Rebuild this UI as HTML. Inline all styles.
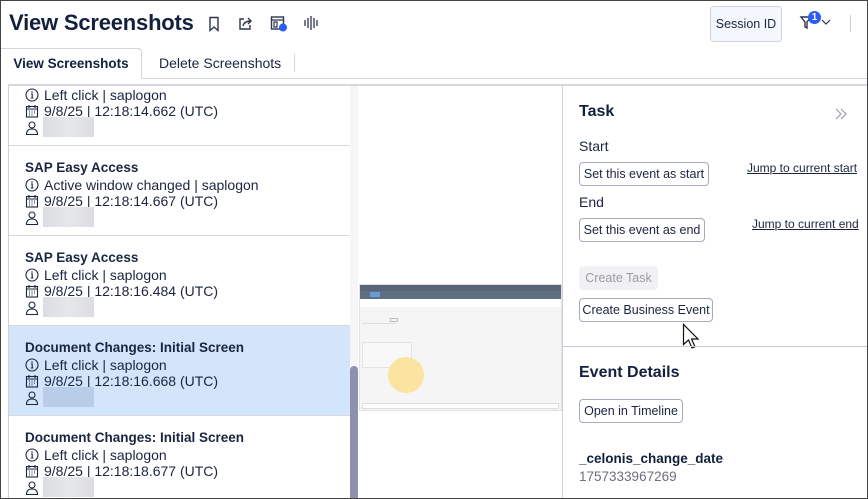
<!DOCTYPE html>
<html><head><meta charset="utf-8"><style>
*{box-sizing:border-box;margin:0;padding:0}
body{width:868px;height:499px;overflow:hidden;background:#fff;font-family:"Liberation Sans",sans-serif;color:#1a2540;position:relative}
.frame{position:absolute;left:0;top:0;width:868px;height:499px;border:1px solid #444;z-index:50;pointer-events:none}
.abs{position:absolute}
h1{position:absolute;left:9px;top:10px;font-size:22px;font-weight:bold;color:#12203d;letter-spacing:-0.2px}
.tab{position:absolute;top:48px;height:31px;font-size:14px;line-height:30px}
.item{position:absolute;left:9px;width:341px;height:90px;border-bottom:1px solid #d8d8e2;font-size:14px;color:#1a2540}
.item .t{position:absolute;left:16px;top:14px;font-weight:bold;font-size:13.5px}
.item .l{position:absolute;left:16px;height:16px;line-height:16px;white-space:nowrap}
.item svg{vertical-align:-2px;margin-right:5px}
.blur{position:absolute;left:34px;width:51px;height:20px;background:linear-gradient(90deg,#dcdde2,#e6e7ea,#dcdde2)}
.btn{position:absolute;height:24px;border:1px solid #a9a9ba;border-radius:4px;font-size:12.5px;line-height:22px;color:#1a2540;background:#fff;white-space:nowrap;text-align:center}
.lnk{position:absolute;font-size:12px;text-decoration:underline;color:#1a2540;white-space:nowrap}
.lbl{position:absolute;font-size:14px;color:#1a2540}
</style></head><body>
<div class="frame"></div>
<h1>View Screenshots</h1>
<svg class="abs" style="left:208px;top:16px" width="12" height="16" viewBox="0 0 12 16"><path d="M2 1.5h8v13l-4-3.5-4 3.5z" fill="none" stroke="#2b3550" stroke-width="1.4"/></svg>
<svg class="abs" style="left:238px;top:16px" width="16" height="15" viewBox="0 0 16 15"><path d="M6 3H2v10h10V9" fill="none" stroke="#2b3550" stroke-width="1.4"/><path d="M5 10c1-4 4-5 8-5M10 2l3 3-3 3" fill="none" stroke="#2b3550" stroke-width="1.4"/></svg>
<svg class="abs" style="left:270px;top:15px" width="18" height="18" viewBox="0 0 18 18"><rect x="1.5" y="2" width="12" height="12" fill="none" stroke="#2b3550" stroke-width="1.4"/><path d="M1.5 5h12M4 7h3v5H4z" fill="none" stroke="#2b3550" stroke-width="1.2"/><circle cx="13" cy="12.5" r="4" fill="#2d5cf6"/></svg>
<svg class="abs" style="left:303px;top:15px" width="16" height="16" viewBox="0 0 16 16"><path d="M2 5v6M5 3v10M8 1v14M11 3v10M14 5v6" stroke="#2b3550" stroke-width="1.3"/></svg>
<div class="abs" style="left:710px;top:6px;width:72px;height:36px;border:1px solid #cfd4e0;border-radius:4px;background:#f4f8fe;font-size:12.5px;line-height:34px;text-align:center">Session ID</div>
<svg class="abs" style="left:799px;top:14px" width="16" height="16" viewBox="0 0 16 16"><path d="M2 3h10l-4 5v6l-2-1V8z" fill="none" stroke="#2b3550" stroke-width="1.4"/></svg>
<div class="abs" style="left:808px;top:11px;width:13px;height:13px;border-radius:50%;background:#2d5cf6;color:#fff;font-size:10px;font-weight:bold;line-height:13px;text-align:center">1</div>
<svg class="abs" style="left:821px;top:19px" width="10" height="6" viewBox="0 0 10 6"><path d="M1 1l4 4 4-4" fill="none" stroke="#2b3550" stroke-width="1.2"/></svg>
<div class="abs" style="left:850px;top:15px;width:1px;height:17px;background:#ccc"></div>
<!-- tabs -->
<div class="abs" style="left:0;top:78px;width:868px;height:1px;background:#d4d4de"></div>
<div class="tab" style="left:1px;width:141px;border:1px solid #d4d4de;border-bottom:1px solid #fff;border-left:none;border-radius:0 4px 0 0;background:#fff;text-align:center;font-weight:bold;color:#12203d;font-size:13.5px">View Screenshots</div>
<div class="tab" style="left:159px;color:#1a2540">Delete Screenshots</div>
<div class="abs" style="left:294px;top:54px;width:1px;height:18px;background:#d4d4de"></div>
<div class="abs" style="left:8px;top:84px;width:860px;height:2px;background:#d6d6e0"></div>
<div class="abs" style="left:8px;top:86px;width:1px;height:413px;background:#cfcfd8"></div>
<!-- list -->
<svg width="0" height="0" style="position:absolute"><defs>
<symbol id="i" viewBox="0 0 14 14"><circle cx="7" cy="7" r="6" fill="none" stroke="#1a2540" stroke-width="1.1"/><path d="M6 6h1.2v4M5.8 10h2.6" stroke="#1a2540" stroke-width="1.1" fill="none"/><circle cx="7" cy="4" r=".8" fill="#1a2540"/></symbol>
<symbol id="c" viewBox="0 0 14 14"><rect x="1.5" y="2.5" width="11" height="10.5" fill="none" stroke="#1a2540" stroke-width="1.1"/><path d="M1.5 5h11M4 1v3M10 1v3" stroke="#1a2540" stroke-width="1.1"/><path d="M4 7h1M6.5 7h1M9 7h1M4 9h1M6.5 9h1M9 9h1M4 11h1M6.5 11h1" stroke="#1a2540" stroke-width="1"/></symbol>
<symbol id="u" viewBox="0 0 14 14"><circle cx="7" cy="4" r="3" fill="none" stroke="#1a2540" stroke-width="1.1"/><path d="M1.5 13.5c0-4 2.5-5.5 5.5-5.5s5.5 1.5 5.5 5.5z" fill="none" stroke="#1a2540" stroke-width="1.1"/></symbol>
</defs></svg>
<div style="position:absolute;left:0;top:86px;width:350px;height:413px;overflow:hidden">
 <div class="item" style="top:-30px"><div class="l" style="top:31px"><svg width="14" height="14"><use href="#i"/></svg>Left click | saplogon</div><div class="l" style="top:47px"><svg width="14" height="14"><use href="#c"/></svg>9/8/25 | 12:18:14.662 (UTC)</div><div class="l" style="top:64px"><svg width="14" height="14"><use href="#u"/></svg></div><div class="blur" style="top:61px"></div></div>
 <div class="item" style="top:60px"><div class="t">SAP Easy Access</div><div class="l" style="top:31px"><svg width="14" height="14"><use href="#i"/></svg>Active window changed | saplogon</div><div class="l" style="top:47px"><svg width="14" height="14"><use href="#c"/></svg>9/8/25 | 12:18:14.667 (UTC)</div><div class="l" style="top:64px"><svg width="14" height="14"><use href="#u"/></svg></div><div class="blur" style="top:61px"></div></div>
 <div class="item" style="top:150px"><div class="t">SAP Easy Access</div><div class="l" style="top:31px"><svg width="14" height="14"><use href="#i"/></svg>Left click | saplogon</div><div class="l" style="top:47px"><svg width="14" height="14"><use href="#c"/></svg>9/8/25 | 12:18:16.484 (UTC)</div><div class="l" style="top:64px"><svg width="14" height="14"><use href="#u"/></svg></div><div class="blur" style="top:61px"></div></div>
 <div class="item" style="top:240px;background:#d3e5fb"><div class="t">Document Changes: Initial Screen</div><div class="l" style="top:31px"><svg width="14" height="14"><use href="#i"/></svg>Left click | saplogon</div><div class="l" style="top:47px"><svg width="14" height="14"><use href="#c"/></svg>9/8/25 | 12:18:16.668 (UTC)</div><div class="l" style="top:64px"><svg width="14" height="14"><use href="#u"/></svg></div><div class="blur" style="top:61px;background:#b9cde8"></div></div>
 <div class="item" style="top:330px"><div class="t">Document Changes: Initial Screen</div><div class="l" style="top:31px"><svg width="14" height="14"><use href="#i"/></svg>Left click | saplogon</div><div class="l" style="top:47px"><svg width="14" height="14"><use href="#c"/></svg>9/8/25 | 12:18:18.677 (UTC)</div><div class="l" style="top:64px"><svg width="14" height="14"><use href="#u"/></svg></div><div class="blur" style="top:61px"></div></div>
</div>
<div class="abs" style="left:350px;top:86px;width:8px;height:413px;background:#f6f6f9"></div>
<div class="abs" style="left:350px;top:366px;width:8px;height:133px;border-radius:4px 4px 0 0;background:#8e90b0"></div>
<!-- thumbnail -->
<div class="abs" style="left:359px;top:284px;width:203px;height:127px;background:#f5f5f5;border:1px solid #e2e2e2">
 <div class="abs" style="left:0;top:0;width:201px;height:6px;background:#5a6678"></div>
 <div class="abs" style="left:0;top:6px;width:201px;height:8px;background:#5d6f82"></div>
 <div class="abs" style="left:10px;top:7px;width:10px;height:5px;background:#6a9ad8"></div>
 <div class="abs" style="left:0;top:14px;width:201px;height:8px;background:#fff"></div>
 <div class="abs" style="left:2px;top:38px;width:34px;height:14px;border-top:1px solid #ddd"></div>
 <div class="abs" style="left:30px;top:33px;width:8px;height:4px;border:1px solid #bbb"></div>
 <div class="abs" style="left:2px;top:57px;width:50px;height:26px;border:1px solid #e4e4e4;background:#f8f8f8"></div>
 <div class="abs" style="left:28px;top:72px;width:36px;height:36px;border-radius:50%;background:#fbe3a0"></div>
 <div class="abs" style="left:2px;top:118px;width:197px;height:6px;background:#fff;border:1px solid #ddd"></div>
</div>
<!-- right panel -->
<div class="abs" style="left:562px;top:86px;width:1px;height:413px;background:#d0d0da"></div>
<div class="abs" style="left:579px;top:103px;font-size:16px;font-weight:bold;color:#12203d">Task</div>
<svg class="abs" style="left:835px;top:108px" width="12" height="12" viewBox="0 0 12 12"><path d="M1 1l5 5-5 5M6 1l5 5-5 5" fill="none" stroke="#9a9aaa" stroke-width="1.2"/></svg>
<div class="lbl" style="left:579px;top:138px">Start</div>
<div class="btn" style="left:579px;top:162px;width:130px">Set this event as start</div>
<div class="lnk" style="left:747px;top:161px">Jump to current start</div>
<div class="lbl" style="left:579px;top:194px">End</div>
<div class="btn" style="left:579px;top:218px;width:126px">Set this event as end</div>
<div class="lnk" style="left:752px;top:217px">Jump to current end</div>
<div class="btn" style="left:579px;top:266px;width:79px;border:none;background:#f1f1f3;color:#9b9ba8;line-height:24px">Create Task</div>
<div class="btn" style="left:579px;top:298px;width:134px">Create Business Event</div>
<svg class="abs" style="left:682px;top:323px" width="20" height="28" viewBox="0 0 20 28"><path d="M1.5 1.5v20l5-4.5 3.5 8 3-1.3-3.5-7.7h6.5z" fill="#fff" stroke="#111" stroke-width="1.2"/></svg>
<div class="abs" style="left:563px;top:346px;width:305px;height:1px;background:#c8c8d2"></div>
<div class="abs" style="left:579px;top:364px;font-size:16px;font-weight:bold;color:#12203d">Event Details</div>
<div class="btn" style="left:579px;top:399px;width:104px">Open in Timeline</div>
<div class="abs" style="left:579px;top:451px;font-size:13.5px;font-weight:bold;color:#12203d">_celonis_change_date</div>
<div class="abs" style="left:579px;top:469px;font-size:13.5px;color:#6e6e82">1757333967269</div>
</body></html>
